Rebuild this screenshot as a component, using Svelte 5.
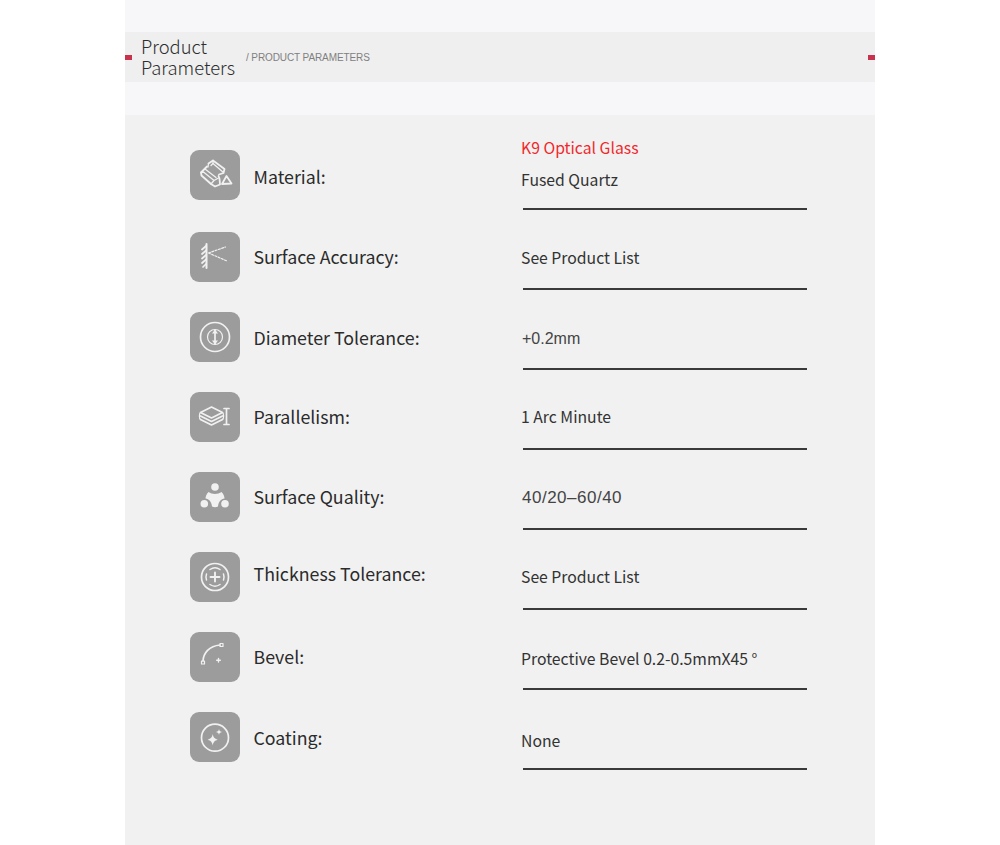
<script>
  // shift classes nudge the text by a pixel or two, the source was a hand-placed image
  const rows = [
    { icon: 'ingot', label: 'Material:', labelShift: 'down-2', values: ['Fused Quartz'], first: true },
    { icon: 'mirror', label: 'Surface Accuracy:', values: ['See Product List'], valueShift: 'down-1' },
    { icon: 'dial', label: 'Diameter Tolerance:', labelShift: 'down-1', values: ['+0.2mm'], plain: true, valueShift: 'down-2' },
    { icon: 'layers', label: 'Parallelism:', values: ['1 Arc Minute'] },
    { icon: 'trio', label: 'Surface Quality:', values: ['40/20–60/40'], wide: true, valueShift: 'down-1' },
    { icon: 'target', label: 'Thickness Tolerance:', labelShift: 'up-3', values: ['See Product List'] },
    { icon: 'bevel', label: 'Bevel:', values: ['Protective Bevel 0.2-0.5mmX45 °'], valueShift: 'down-2' },
    { icon: 'spark', label: 'Coating:', labelShift: 'down-1', values: ['None'], valueShift: 'down-4' }
  ];
</script>

<div class="page">
  <div class="band"></div>
  <header class="title-bar">
    <h2>Product Parameters</h2>
    <span class="sub">/ PRODUCT PARAMETERS</span>
  </header>
  <div class="band short"></div>

  <section class="panel">
    {#each rows as row}
      <div class="row" class:first={row.first}>
        <div class="name">
          <div class="icon">
            <svg viewBox="0 0 50 50" width="50" height="50" fill="none" stroke="#f1f1f1" stroke-width="1.7" stroke-linejoin="round" stroke-linecap="round">
              {#if row.icon === 'ingot'}
                <path d="M18.500 13.500l4.500-3 11.500 8.500-1 4-4.500 1.500" stroke-width="1.800" />
                <path d="M21 15.500l2-2 10.500 9" stroke-width="1.300" />
                <path d="M18.500 13.500l-.5 3.500M23 10.500v3" stroke-width="1.300" />
                <path d="M17 16.500l-6 6 .5 3 9.500 8.500 4 2.500 5-2-.5-6-1-2.500" stroke-width="1.800" />
                <path d="M11 22.500l2.500-.5 10.500 8.500-3 3.500M24 30.500l4.500-2.500M15 19l11 8.500" stroke-width="1.300" />
                <path d="M36.500 26l5 7.500-9.500.5z" stroke-width="1.800" />
              {:else if row.icon === 'mirror'}
                <path d="M16.500 12v24" stroke-width="2" />
                <path d="M16 14l-4 3.500M16 18.500l-4 3.500M16 23l-4 3.500M16 27.500l-4 3.500M16 32l-3 3" stroke-width="1.700" />
                <path d="M18.500 21l17-6M18.500 21l18.500 8" stroke-width="1.200" stroke-dasharray="2 1.500" />
              {:else if row.icon === 'dial'}
                <circle cx="25" cy="25" r="14.500" />
                <circle cx="25" cy="25" r="7.500" stroke-width="1.200" />
                <path d="M25 18v14" />
                <path d="M22 21.500l3-4 3 4zM22 28.500l3 4 3-4z" fill="#f1f1f1" stroke="none" />
              {:else if row.icon === 'layers'}
                <path d="M10.500 20.500l11-5.500 11 5.500-11 5.500z" />
                <path d="M10.500 24l11 5.500 11-5.500M10.500 27.500l11 5.500 11-5.500" />
                <path d="M10.500 20.500c-1.500 1-1.500 6 0 7M32.500 20.500c1.500 1 1.500 6 0 7" stroke-width="1.200" />
                <path d="M34 16.500h5M34 32.500h5M36.500 16.500v16" />
              {:else if row.icon === 'trio'}
                <g fill="#f1f1f1" stroke="none">
                  <circle cx="25" cy="15" r="3.800" />
                  <circle cx="14.300" cy="31.700" r="3.800" />
                  <circle cx="35" cy="31.700" r="3.800" />
                  <path d="M18.500 20c3.500 2.500 9.500 2.500 13 0 2 2 3 4.500 3 6.500-3.500.5-6 3-6.500 8-2 1-4 1-6 0-.5-5-3-7.500-6.500-8 0-2 1-4.500 3-6.500z" />
                </g>
              {:else if row.icon === 'target'}
                <circle cx="25" cy="25" r="13.500" />
                <path d="M20 17.500a9 9 0 0 1 10 0M20 32.500a9 9 0 0 0 10 0M16.500 22a9 9 0 0 0 0 6M33.500 22a9 9 0 0 1 0 6" stroke-width="1.500" />
                <path d="M25 20.500v9M20.500 25h9" stroke-width="1.900" />
              {:else if row.icon === 'bevel'}
                <path d="M13 29c.5-8 6-15 17-16" />
                <rect x="11.500" y="29" width="3" height="3" stroke-width="1.200" />
                <rect x="30" y="11.500" width="3" height="3" stroke-width="1.200" />
                <path d="M28.500 26.500v3.500M26.700 28.200h3.600" stroke-width="1.400" />
              {:else if row.icon === 'spark'}
                <circle cx="25" cy="25.700" r="13.500" />
                <g fill="#f1f1f1" stroke="none">
                  <path d="M22.700 22c.7 3.300 1.700 4.700 5 5.700-3.300 1-4.300 2.400-5 5.700-.7-3.300-1.700-4.700-5-5.700 3.300-1 4.300-2.400 5-5.700z" />
                  <path d="M29 17c.4 1.900.9 2.500 3 3-2.100.5-2.600 1.100-3 3-.4-1.900-.9-2.500-3-3 2.100-.5 2.600-1.100 3-3z" />
                </g>
              {/if}
            </svg>
          </div>
          <span class="label {row.labelShift ?? ''}">{row.label}</span>
        </div>

        <div class="spec">
          {#if row.first}
            <p class="value accent">K9 Optical Glass</p>
          {/if}
          {#each row.values as value}
            <p class="value {row.valueShift ?? ''}" class:plain={row.plain} class:wide={row.wide}>{value}</p>
          {/each}
          <div class="rule"></div>
        </div>
      </div>
    {/each}
  </section>
</div>

<style>
  :global(body) {
    background: #fff;
  }

  .page {
    width: 750px;
    height: 845px;
    margin: 0 auto;
    overflow: hidden;
    font-family: "Noto Sans CJK SC", "Noto Sans", sans-serif;
    color: #333;
  }

  .band {
    height: 32px;
    background: #f7f7f9;
  }

  .band.short {
    height: 33px;
  }

  .title-bar {
    position: relative;
    display: flex;
    align-items: center;
    height: 50px;
    padding-left: 16px;
    background: #efefef;
  }

  .title-bar::before,
  .title-bar::after {
    content: "";
    position: absolute;
    top: 23px;
    width: 7px;
    height: 5px;
    background: #c8324c;
  }

  .title-bar::before {
    left: 0;
  }

  .title-bar::after {
    right: 0;
  }

  h2 {
    width: 105px;
    margin: -1px 0 0;
    font-size: 18.4px;
    font-weight: 300;
    line-height: 21px;
    color: #2e2e2e;
  }

  .sub {
    font-family: "Liberation Sans", Arial, sans-serif;
    font-size: 10px;
    letter-spacing: -0.1px;
    color: #808080;
  }

  .panel {
    height: 730px;
    padding: 15px 68px 0 65px;
    box-sizing: border-box;
    background: #f1f1f1;
  }

  .row {
    display: grid;
    grid-template-columns: 331px 286px;
    height: 80px;
    align-items: end;
  }

  .name {
    display: flex;
    align-items: center;
    gap: 13.5px;
    padding-bottom: 8px;
  }

  .row.first .name {
    padding-bottom: 10px;
  }

  .icon {
    flex: none;
    width: 50px;
    height: 50px;
    border-radius: 9px;
    background: #9c9c9c;
  }

  .icon svg {
    display: block;
  }

  .label {
    position: relative;
    margin-top: -2px;
    font-size: 17.8px;
    font-weight: 400;
    color: #2b2b2b;
  }

  .value {
    position: relative;
    margin: 0;
    font-size: 15.75px;
    line-height: 32px;
    font-weight: 400;
    color: #333;
  }

  .value.accent {
    color: #f0282d;
  }

  .value.plain {
    font-family: "Liberation Sans", Arial, sans-serif;
    font-size: 16px;
    padding-left: 1px;
    color: #444;
  }

  .value.wide {
    font-family: "Liberation Sans", Arial, sans-serif;
    font-size: 17px;
    letter-spacing: 0.5px;
    padding-left: 1px;
    color: #444;
  }

  .down-1 { top: 1px; }
  .down-2 { top: 2px; }
  .down-4 { top: 4px; }
  .up-3 { top: -3px; }

  .spec {
    display: flex;
    flex-direction: column;
  }

  .rule {
    height: 2px;
    margin: 15px 0 0 2px;
    background: #3a3a3a;
  }

  .row.first .rule {
    margin-top: 12px;
  }
</style>
